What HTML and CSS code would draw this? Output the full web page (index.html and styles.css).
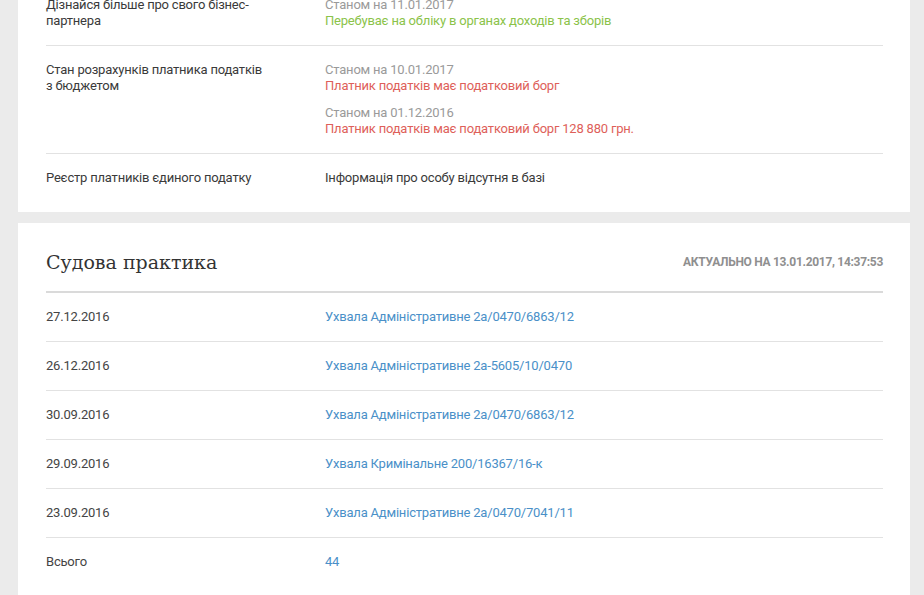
FILE: index.html
```html
<!DOCTYPE html>
<html lang="uk">
<head>
<meta charset="utf-8">
<title>Судова практика</title>
<link rel="stylesheet" href="styles.css">
</head>
<body>
<div class="page">
  <section class="card card-info">
    <div class="row">
      <div class="label">Дізнайся більше про свого бізнес-<br>партнера</div>
      <div class="value">
        <div class="group">
          <div class="muted">Станом на 11.01.2017</div>
          <div class="ok">Перебуває на обліку в органах доходів та зборів</div>
        </div>
      </div>
    </div>
    <div class="row">
      <div class="label">Стан розрахунків платника податків<br>з бюджетом</div>
      <div class="value">
        <div class="group">
          <div class="muted">Станом на 10.01.2017</div>
          <div class="bad">Платник податків має податковий борг</div>
        </div>
        <div class="group">
          <div class="muted">Станом на 01.12.2016</div>
          <div class="bad">Платник податків має податковий борг 128 880 грн.</div>
        </div>
      </div>
    </div>
    <div class="row last">
      <div class="label">Реєстр платників єдиного податку</div>
      <div class="value">Інформація про особу відсутня в базі</div>
    </div>
  </section>

  <section class="card card-court">
    <header class="card-head">
      <h2 class="title">Судова практика</h2>
      <div class="stamp">Актуально на 13.01.2017, 14:37:53</div>
    </header>
    <div class="row">
      <div class="label date">27.12.2016</div>
      <div class="value"><a class="link" href="#">Ухвала Адміністративне 2а/0470/6863/12</a></div>
    </div>
    <div class="row">
      <div class="label date">26.12.2016</div>
      <div class="value"><a class="link" href="#">Ухвала Адміністративне 2а-5605/10/0470</a></div>
    </div>
    <div class="row">
      <div class="label date">30.09.2016</div>
      <div class="value"><a class="link" href="#">Ухвала Адміністративне 2а/0470/6863/12</a></div>
    </div>
    <div class="row">
      <div class="label date">29.09.2016</div>
      <div class="value"><a class="link" href="#">Ухвала Кримінальне 200/16367/16-к</a></div>
    </div>
    <div class="row">
      <div class="label date">23.09.2016</div>
      <div class="value"><a class="link" href="#">Ухвала Адміністративне 2а/0470/7041/11</a></div>
    </div>
    <div class="row last">
      <div class="label date">Всього</div>
      <div class="value"><a class="link" href="#">44</a></div>
    </div>
  </section>
</div>
</body>
</html>
```
FILE: styles.css
```css
html, body {
  margin: 0;
  padding: 0;
  background: #ebebeb;
  font-family: Roboto, "Liberation Sans", Arial, sans-serif;
  font-size: 13px;
  line-height: 16px;
  letter-spacing: -0.2px;
  color: #3a3a3a;
  overflow: hidden;
}

.page {
  display: flex;
  flex-direction: column;
  gap: 11px;
  padding: 0 14px 0 18px;
  margin-top: -19px;
}

.card {
  background: #ffffff;
  padding: 0 27px 10px 28px;
}

.row {
  display: flex;
  padding: 16px 0;
  border-bottom: 1px solid #e2e2e2;
}

.row.last {
  border-bottom: none;
}

.label {
  width: 279px;
  flex: none;
}

.value {
  flex: 1;
  display: flex;
  flex-direction: column;
  gap: 11px;
}

.muted {
  color: #9a9a9a;
}

.ok {
  color: #8bc34a;
}

.bad {
  color: #de5f5a;
}

.card-head {
  display: flex;
  align-items: center;
  justify-content: space-between;
  padding: 25px 0 15px;
  border-bottom: 2px solid #dadada;
}

.title {
  margin: 0;
  font-family: "DejaVu Serif", "Liberation Serif", serif;
  font-weight: normal;
  font-size: 19px;
  line-height: 28px;
  color: #333333;
  letter-spacing: 0;
}

.stamp {
  font-size: 12px;
  font-weight: bold;
  text-transform: uppercase;
  letter-spacing: -0.3px;
  color: #8f8f8f;
}

.date {
  color: #444444;
}

.link {
  color: #4a90c8;
  text-decoration: none;
}
```
